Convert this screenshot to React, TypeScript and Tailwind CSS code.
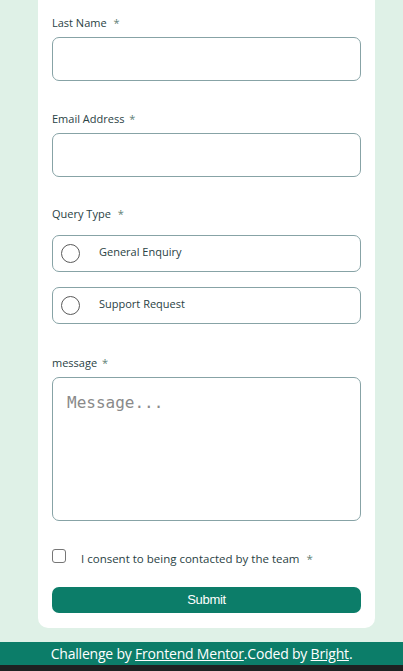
export default function App() {
  return (
    <div className="min-h-screen bg-[#dff1e7] flex flex-col font-['Open_Sans',sans-serif]">
      <form className="ml-[38px] w-[337px] bg-white rounded-b-[10px] px-[14px] pt-[15px] pb-[15px] flex flex-col">
        <label className="text-[11px] leading-4 text-[#2a4244]">
          Last Name <span className="ml-1 text-[#5f7f76]">*</span>
        </label>
        <input className="mt-[6px] h-[44px] w-full rounded-[7px] border border-[#87a3a6] outline-none" />

        <label className="mt-[30px] text-[11px] leading-4 text-[#2a4244]">
          Email Address <span className="ml-[2px] text-[#5f7f76]">*</span>
        </label>
        <input className="mt-[6px] h-[44px] w-full rounded-[7px] border border-[#87a3a6] outline-none" />

        <label className="mt-[29px] text-[11px] leading-4 text-[#2a4244]">
          Query Type <span className="ml-1 text-[#5f7f76]">*</span>
        </label>
        <div className="mt-[13px] flex flex-col gap-[15px]">
          {["General Enquiry", "Support Request"].map((t) => (
            <div key={t} className="h-[37px] rounded-[7px] border border-[#87a3a6] flex items-center pl-[8px]">
              <span className="w-[19px] h-[19px] rounded-full border border-[#5a5a5a]" />
              <span className="ml-[19px] -mt-[3px] text-[11px] text-[#2a4244]">{t}</span>
            </div>
          ))}
        </div>

        <label className="mt-[31px] text-[11px] leading-4 text-[#2a4244]">
          message <span className="ml-[2px] text-[#5f7f76]">*</span>
        </label>
        <textarea
          placeholder="Message..."
          className="mt-[6px] h-[144px] w-full rounded-[7px] border border-[#87a3a6] outline-none resize-none px-[14px] pt-[13px] font-['DejaVu_Sans_Mono',monospace] text-[16px] placeholder:text-[#8a8a8a]"
        />

        <div className="mt-[28px] flex items-start">
          <span className="w-[14px] h-[14px] rounded-[3px] border border-[#767676]" />
          <span className="ml-[15px] mt-[2px] text-[11.5px] leading-4 text-[#2a4244]">
            I consent to being contacted by the team <span className="ml-1 text-[#5f7f76]">*</span>
          </span>
        </div>

        <button
          type="button"
          className="mt-[20px] h-[26px] w-full rounded-[7px] bg-[#0c7d69] text-white text-[13px] font-['Liberation_Sans',sans-serif] tracking-[-0.3px]"
        >
          Submit
        </button>
      </form>

      <footer className="mt-[14px] h-[23px] bg-[#0c7d69] text-white text-[14px] tracking-[-0.2px] leading-[23px] text-center">
        Challenge by <a className="underline">Frontend Mentor</a>.Coded by <a className="underline">Bright</a>.
      </footer>
      <div className="h-[6px] bg-[#1e2121]" />
    </div>
  );
}
